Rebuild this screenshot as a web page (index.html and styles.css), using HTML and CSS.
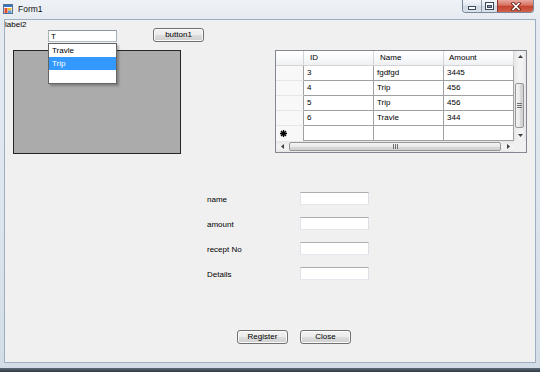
FILE: index.html
```html
<!DOCTYPE html>
<html>
<head>
<meta charset="utf-8">
<title>Form1</title>
<link rel="stylesheet" href="styles.css">
</head>
<body>
<div class="window">
  <div class="titlebar">
    <svg class="app-icon" width="10" height="10" viewBox="0 0 10 10">
      <rect x="0.5" y="0.5" width="9" height="9" fill="#fff" stroke="#56719a"/>
      <rect x="1" y="1" width="8" height="2" fill="#3b73c4"/>
      <rect x="1.5" y="4" width="3" height="5" fill="#e0502c"/>
      <rect x="5" y="4" width="3.5" height="2.5" fill="#f3c02c"/>
      <rect x="5" y="6.5" width="3.5" height="2.5" fill="#5b9bd8"/>
    </svg>
    <span class="title">Form1</span>
    <div class="caption-buttons">
      <div class="cap cap-min">
        <svg width="8" height="4" viewBox="0 0 8 4"><rect x="0.5" y="0.5" width="7" height="3" fill="#fff" stroke="#3c4b5e"/></svg>
      </div>
      <div class="cap cap-max">
        <svg width="9" height="8" viewBox="0 0 9 8"><rect x="0.5" y="0.5" width="8" height="7" fill="#fff" stroke="#3c4b5e"/><rect x="2.5" y="3.5" width="4" height="2" fill="#8796a8" stroke="#3c4b5e"/></svg>
      </div>
      <div class="cap cap-close">
        <svg width="10" height="9" viewBox="0 0 10 9"><path d="M2 1.5 L8 7.5 M8 1.5 L2 7.5" stroke="#5a1c14" stroke-width="3.2" stroke-linecap="square"/><path d="M2 1.5 L8 7.5 M8 1.5 L2 7.5" stroke="#fff" stroke-width="1.6" stroke-linecap="square"/></svg>
      </div>
    </div>
  </div>
  <div class="frame-body">
    <div class="client">
      <div class="label2">label2</div>
      <div class="row-top">
        <div class="combo">
          <input class="textbox combo-input" type="text" value="T">
          <ul class="suggest">
            <li>Travle</li>
            <li class="sel">Trip</li>
            <li></li>
          </ul>
        </div>
        <button class="btn btn1">button1</button>
      </div>
      <div class="row-main">
        <div class="panel"></div>
        <div class="dgv">
          <div class="dgv-corner"></div>
          <div class="dgv-colhead">ID</div>
          <div class="dgv-colhead">Name</div>
          <div class="dgv-colhead">Amount</div>
          <div class="vscroll">
            <div class="arrow"><svg width="5" height="3" viewBox="0 0 5 3"><polygon points="2.5,0 5,3 0,3" fill="#404040"/></svg></div>
            <div class="vthumb"><svg width="5" height="5" viewBox="0 0 5 5"><path d="M0 0.5H5M0 2.5H5M0 4.5H5" stroke="#6f6f6f" stroke-width="1"/></svg></div>
            <div class="arrow arrow-end"><svg width="5" height="3" viewBox="0 0 5 3"><polygon points="0,0 5,0 2.5,3" fill="#404040"/></svg></div>
          </div>

          <div class="dgv-rowhead"></div>
          <div class="cell">3</div><div class="cell">fgdfgd</div><div class="cell">3445</div>
          <div class="dgv-rowhead"></div>
          <div class="cell">4</div><div class="cell">Trip</div><div class="cell">456</div>
          <div class="dgv-rowhead"></div>
          <div class="cell">5</div><div class="cell">Trip</div><div class="cell">456</div>
          <div class="dgv-rowhead"></div>
          <div class="cell">6</div><div class="cell">Travle</div><div class="cell">344</div>
          <div class="dgv-rowhead newrow">
            <svg width="7" height="7" viewBox="0 0 7 7"><path d="M3.5 0V7M0 3.5H7M1 1L6 6M6 1L1 6" stroke="#000" stroke-width="1.3"/></svg>
          </div>
          <div class="cell"></div><div class="cell"></div><div class="cell"></div>

          <div class="hscroll">
            <div class="harrow"><svg width="3" height="5" viewBox="0 0 3 5"><polygon points="0,2.5 3,0 3,5" fill="#404040"/></svg></div>
            <div class="hthumb"><svg width="5" height="5" viewBox="0 0 5 5"><path d="M0.5 0V5M2.5 0V5M4.5 0V5" stroke="#6f6f6f" stroke-width="1"/></svg></div>
            <div class="harrow"><svg width="3" height="5" viewBox="0 0 3 5"><polygon points="0,0 3,2.5 0,5" fill="#404040"/></svg></div>
          </div>
          <div class="scroll-corner"></div>
        </div>
      </div>
      <div class="fields">
        <label class="field-label">name</label>
        <input class="textbox field-input" type="text">
        <label class="field-label">amount</label>
        <input class="textbox field-input" type="text">
        <label class="field-label">recept No</label>
        <input class="textbox field-input" type="text">
        <label class="field-label">Details</label>
        <input class="textbox field-input" type="text">
      </div>
      <div class="actions">
        <button class="btn">Register</button>
        <button class="btn">Close</button>
      </div>
    </div>
  </div>
</div>
<div class="taskbar"></div>
</body>
</html>
```

FILE: styles.css
```css
* { box-sizing: border-box; }
html, body { margin: 0; padding: 0; }
body {
  width: 540px;
  height: 372px;
  overflow: hidden;
  background: #e9eef4;
  font-family: "Liberation Sans", Arial, sans-serif;
  font-size: 8px;
  color: #000;
}

.window {
  width: 540px;
  height: 368px;
  background: linear-gradient(to bottom, #eef2f6 0px, #e6ebf1 19px, #dde5ee 200px, #d3dde8 100%);
  display: flex;
  flex-direction: column;
}

.titlebar {
  height: 19px;
  display: flex;
  align-items: flex-start;
}
.app-icon { margin: 4px 0 0 3px; flex: none; }
.title {
  margin-left: 5px;
  line-height: 18px;
  font-size: 8.5px;
  color: #111;
}
.caption-buttons {
  margin-left: auto;
  margin-right: 6px;
  display: flex;
  height: 13px;
  border: 1px solid #7a8798;
  border-top: none;
  border-radius: 0 0 4px 4px;
  overflow: hidden;
}
.cap {
  height: 12px;
  display: flex;
  align-items: center;
  justify-content: center;
}
.cap-min {
  width: 19px;
  background: linear-gradient(to bottom, #f4f7fa 0%, #e3e9f0 45%, #cdd6e1 50%, #dbe3ec 100%);
  border-right: 1px solid #8f9bab;
  padding-top: 4px;
}
.cap-max {
  width: 16px;
  background: linear-gradient(to bottom, #f4f7fa 0%, #e3e9f0 45%, #cdd6e1 50%, #dbe3ec 100%);
  border-right: 1px solid #8a3a30;
}
.cap-close {
  width: 35px;
  background: linear-gradient(to bottom, #e9a99e 0%, #d7705f 45%, #c4432f 50%, #d2614a 100%);
}

.frame-body {
  padding: 0 4px 0 4px;
}
.client {
  height: 344px;
  border: 1px solid #9eafc1;
  background: #f0f0f0;
  display: flex;
  flex-direction: column;
}

.label2 {
  height: 8px;
  line-height: 10px;
  white-space: nowrap;
}

.row-top {
  display: flex;
  align-items: flex-start;
  height: 14px;
}
.combo {
  position: relative;
  margin-left: 43px;
  margin-top: 2px;
  width: 69px;
  height: 12px;
}
.textbox {
  display: block;
  margin: 0;
  padding: 0 0 0 2px;
  font-family: "Liberation Sans", Arial, sans-serif;
  font-size: 8px;
  color: #000;
  background: #fff;
  border: 1px solid;
  border-color: #abadb3 #dbdfe6 #e3e9ef #e2e3ea;
  outline: none;
}
.combo-input {
  width: 69px;
  height: 12px;
  border-color: #8c95a0 #a8b0ba #b4bcc6 #a8b0ba;
}
.suggest {
  position: absolute;
  left: 0;
  top: 13px;
  width: 69px;
  margin: 0;
  padding: 0;
  list-style: none;
  background: #fff;
  border: 1px solid #646464;
  box-shadow: 2px 2px 2px rgba(0, 0, 0, 0.25);
}
.suggest li {
  height: 13px;
  line-height: 13px;
  padding-left: 3px;
}
.suggest li.sel {
  background: #3399ff;
  color: #fff;
}

.btn {
  width: 51px;
  height: 14px;
  margin: 0;
  padding: 0;
  border: 1px solid #707070;
  border-radius: 3px;
  background: linear-gradient(to bottom, #f2f2f2 0%, #ebebeb 50%, #dddddd 51%, #cfcfcf 100%);
  box-shadow: inset 0 0 0 1px #fbfbfb;
  font-family: "Liberation Sans", Arial, sans-serif;
  font-size: 8px;
  line-height: 12px;
  color: #000;
  text-align: center;
}
.btn1 { margin-left: 36px; }

.row-main {
  display: flex;
  align-items: flex-start;
  margin-top: 8px;
}
.panel {
  margin-left: 8px;
  width: 168px;
  height: 104px;
  background: #ababab;
  border: 1px solid #262626;
}

.dgv {
  margin-left: 94px;
  width: 252px;
  height: 103px;
  border: 1px solid #828790;
  background: #fff;
  display: grid;
  grid-template-columns: 28px 70px 70px 70px 12px;
  grid-template-rows: repeat(6, 15px) 11px;
}
.dgv-corner,
.dgv-colhead {
  background: linear-gradient(to bottom, #ffffff 0%, #f7f8fa 60%, #eef0f3 100%);
  border-right: 1px solid #d5d5d5;
  border-bottom: 1px solid #d5d5d5;
  line-height: 14px;
  padding-left: 6px;
  white-space: nowrap;
}
.dgv-colhead:nth-child(4) { padding-left: 5px; }
.dgv-rowhead {
  background: #f8f8f8;
  border-right: 1px solid #a0a0a0;
  border-bottom: 1px solid #e6e6e6;
}
.dgv-rowhead.newrow {
  display: flex;
  align-items: center;
  padding-left: 4px;
  border-bottom: none;
}
.cell {
  border-right: 1px solid #a0a0a0;
  border-bottom: 1px solid #a0a0a0;
  line-height: 14px;
  padding-left: 3px;
  white-space: nowrap;
}

.vscroll {
  grid-column: 5;
  grid-row: 1 / 7;
  background: linear-gradient(to right, #e6e6e6, #f2f2f2 40%, #f2f2f2 70%, #e6e6e6);
  display: flex;
  flex-direction: column;
}
.arrow {
  height: 11px;
  display: flex;
  align-items: center;
  justify-content: center;
  flex: none;
}
.arrow-end { margin-top: auto; }
.vthumb {
  margin: 21px 2px 0 1px;
  height: 45px;
  border: 1px solid #979797;
  border-radius: 2px;
  background: linear-gradient(to right, #f4f4f4 0%, #e9e9e9 50%, #dadada 51%, #d1d1d1 100%);
  display: flex;
  align-items: center;
  justify-content: center;
  flex: none;
}

.hscroll {
  grid-column: 1 / 5;
  grid-row: 7;
  background: linear-gradient(to bottom, #e6e6e6, #f2f2f2 40%, #f2f2f2 70%, #e6e6e6);
  display: flex;
}
.harrow {
  width: 12px;
  display: flex;
  align-items: center;
  justify-content: center;
  flex: none;
}
.hthumb {
  flex: 1;
  margin: 1px 1px 1px 1px;
  border: 1px solid #979797;
  border-radius: 2px;
  background: linear-gradient(to bottom, #f4f4f4 0%, #e9e9e9 50%, #dadada 51%, #d1d1d1 100%);
  display: flex;
  align-items: center;
  justify-content: center;
}
.scroll-corner {
  grid-column: 5;
  grid-row: 7;
  background: #f0f0f0;
}

.fields {
  display: grid;
  grid-template-columns: 93px 69px;
  grid-template-rows: repeat(4, 13px);
  row-gap: 12px;
  margin: 38px 0 0 202px;
}
.field-label {
  line-height: 13px;
  padding-top: 1px;
  white-space: nowrap;
}
.field-input {
  width: 69px;
  height: 13px;
}

.actions {
  display: flex;
  gap: 12px;
  margin: 50px 0 0 232px;
}

.taskbar {
  height: 4px;
  background: linear-gradient(to bottom, #5d6b78, #2d3844);
}
```
